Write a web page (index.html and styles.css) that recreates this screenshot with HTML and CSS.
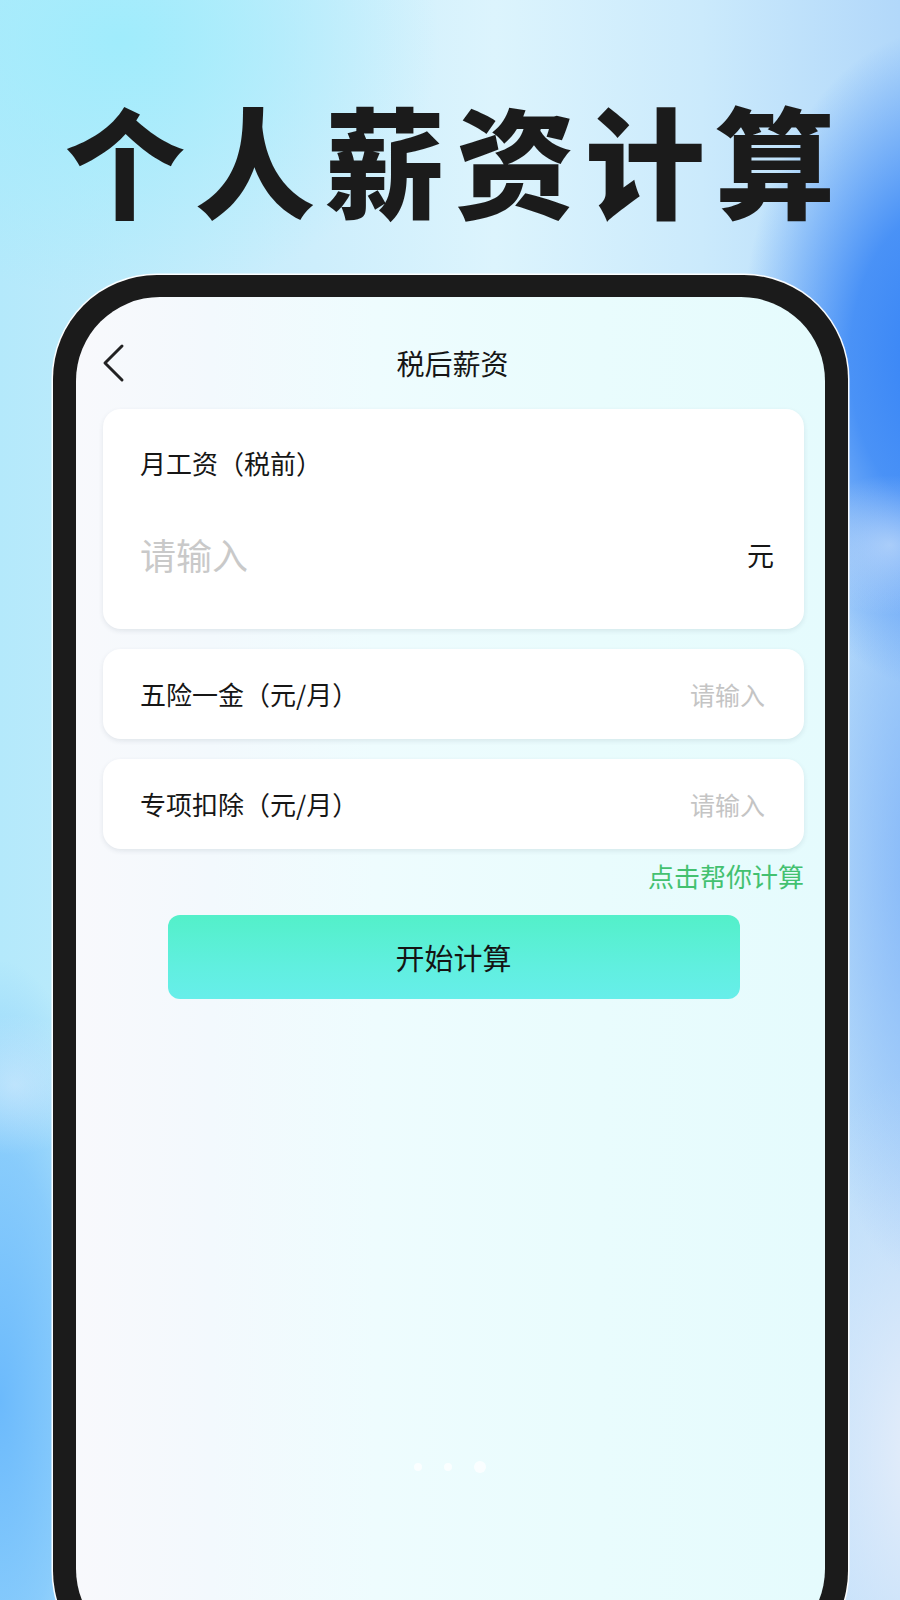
FILE: index.html
```html
<!DOCTYPE html>
<html lang="zh-CN">
<head>
<meta charset="utf-8">
<title>个人薪资计算</title>
<link rel="stylesheet" href="styles.css">
</head>
<body>
<div class="page">
  <div class="hero-wrap">
    <h1 class="hero">个人薪资计算</h1>
  </div>
  <div class="phone">
    <div class="screen">
      <header class="nav">
        <svg class="back" viewBox="0 0 26 40" width="26" height="40" aria-hidden="true">
          <path d="M22 3 L5 20 L22 37" fill="none" stroke="#222" stroke-width="3" stroke-linecap="round" stroke-linejoin="round"/>
        </svg>
        <span class="nav-title">税后薪资</span>
      </header>
      <div class="content">
        <div class="card card-main">
          <div class="label">月工资（税前）</div>
          <div class="input-row">
            <span class="big-ph">请输入</span>
            <span class="unit">元</span>
          </div>
        </div>
        <div class="card card-row">
          <span class="label">五险一金（元/月）</span>
          <span class="ph">请输入</span>
        </div>
        <div class="card card-row">
          <span class="label">专项扣除（元/月）</span>
          <span class="ph">请输入</span>
        </div>
        <div class="help">点击帮你计算</div>
        <div class="btn">开始计算</div>
      </div>
      <div class="dots">
        <span class="dot"></span>
        <span class="dot"></span>
        <span class="dot dot-active"></span>
      </div>
    </div>
  </div>
</div>
</body>
</html>
```

FILE: styles.css
```css
html, body {
  margin: 0;
  padding: 0;
}
body {
  width: 900px;
  height: 1600px;
  overflow: hidden;
  font-family: "Noto Sans CJK SC", "Noto Sans", sans-serif;
}
.page {
  width: 900px;
  height: 1600px;
  overflow: hidden;
  background:
    radial-gradient(ellipse 90px 70px at 890px 545px, rgba(225,238,252,0.55) 0%, rgba(225,238,252,0) 100%),
    radial-gradient(ellipse 200px 330px at 940px 360px, rgba(52,130,246,1) 0%, rgba(62,138,246,0.9) 45%, rgba(80,150,246,0) 100%),
    radial-gradient(ellipse 120px 420px at 920px 860px, rgba(125,178,248,0.85) 0%, rgba(125,178,248,0) 100%),
    radial-gradient(ellipse 80px 70px at 15px 1085px, rgba(225,240,253,0.5) 0%, rgba(225,240,253,0) 100%),
    radial-gradient(ellipse 130px 440px at 0px 1400px, rgba(108,186,252,1) 0%, rgba(112,188,252,0.65) 55%, rgba(112,188,252,0) 100%),
    radial-gradient(ellipse 320px 260px at 120px 40px, rgba(160,236,252,1) 0%, rgba(160,236,252,0) 100%),
    radial-gradient(ellipse 160px 380px at 920px 1450px, rgba(230,238,250,1) 0%, rgba(230,238,250,0) 100%),
    linear-gradient(90deg, #b4e9fb 0%, #cdeefc 35%, #dcf4fd 55%, #cbeafc 78%, #b2d8fa 100%);
}
.hero-wrap {
  height: 275px;
  box-sizing: border-box;
  padding-top: 40px;
  display: flex;
  align-items: center;
  justify-content: center;
}
.hero {
  margin: 0;
  padding-left: 10px;
  font-family: "Noto Sans CJK SC", sans-serif;
  font-weight: 900;
  font-size: 120px;
  line-height: 1;
  letter-spacing: 10px;
  color: #1b1b1b;
}
.phone {
  margin-left: 53px;
  width: 795px;
  height: 1400px;
  box-sizing: border-box;
  padding: 22px 23px;
  background: #1b1b1b;
  border-radius: 104px;
  box-shadow: 0 0 0 1.5px rgba(255,255,255,0.95);
}
.screen {
  position: relative;
  height: 100%;
  border-radius: 84px;
  overflow: hidden;
  background: linear-gradient(90deg, #f8f9fc 0%, #f3f9fd 18%, #eefcfe 40%, #e9fcfd 70%, #e5fbfd 100%);
}
.nav {
  position: relative;
  height: 112px;
  box-sizing: border-box;
  padding-top: 46px;
  display: flex;
  justify-content: center;
}
.back {
  position: absolute;
  left: 24px;
  top: 46px;
}
.nav-title {
  font-size: 28px;
  line-height: 40px;
  color: #161616;
  margin-left: 4px;
}
.content {
  padding: 0 21px 0 27px;
  display: flex;
  flex-direction: column;
}
.card {
  background: #ffffff;
  border-radius: 18px;
  box-shadow: 0 2px 5px rgba(40, 60, 80, 0.10);
}
.card-main {
  padding: 39px 30px 50px 37px;
  margin-bottom: 20px;
}
.label {
  font-size: 26px;
  line-height: 30px;
  color: #161616;
}
.input-row {
  margin-top: 51px;
  height: 50px;
  display: flex;
  align-items: center;
  justify-content: space-between;
}
.big-ph {
  font-size: 36px;
  color: #c9c9c9;
}
.unit {
  font-size: 27px;
  color: #161616;
}
.card-row {
  height: 90px;
  box-sizing: border-box;
  padding: 0 39px 0 37px;
  display: flex;
  align-items: center;
  justify-content: space-between;
  margin-bottom: 20px;
}
.ph {
  font-size: 25px;
  color: #c4c4c4;
}
.help {
  margin-top: -8px;
  text-align: right;
  font-size: 26px;
  line-height: 30px;
  color: #43c170;
}
.btn {
  margin: 24px auto 0;
  width: 572px;
  height: 84px;
  border-radius: 12px;
  background: linear-gradient(180deg, #53f0c9 0%, #60efdf 60%, #67eeea 100%);
  display: flex;
  align-items: center;
  justify-content: center;
  font-size: 29px;
  color: #141414;
}
.dots {
  position: absolute;
  top: 1164px;
  left: 338px;
  display: flex;
  align-items: center;
  gap: 22px;
}
.dot {
  width: 8px;
  height: 8px;
  border-radius: 50%;
  background: rgba(255,255,255,0.75);
}
.dot-active {
  width: 12px;
  height: 12px;
}
```
